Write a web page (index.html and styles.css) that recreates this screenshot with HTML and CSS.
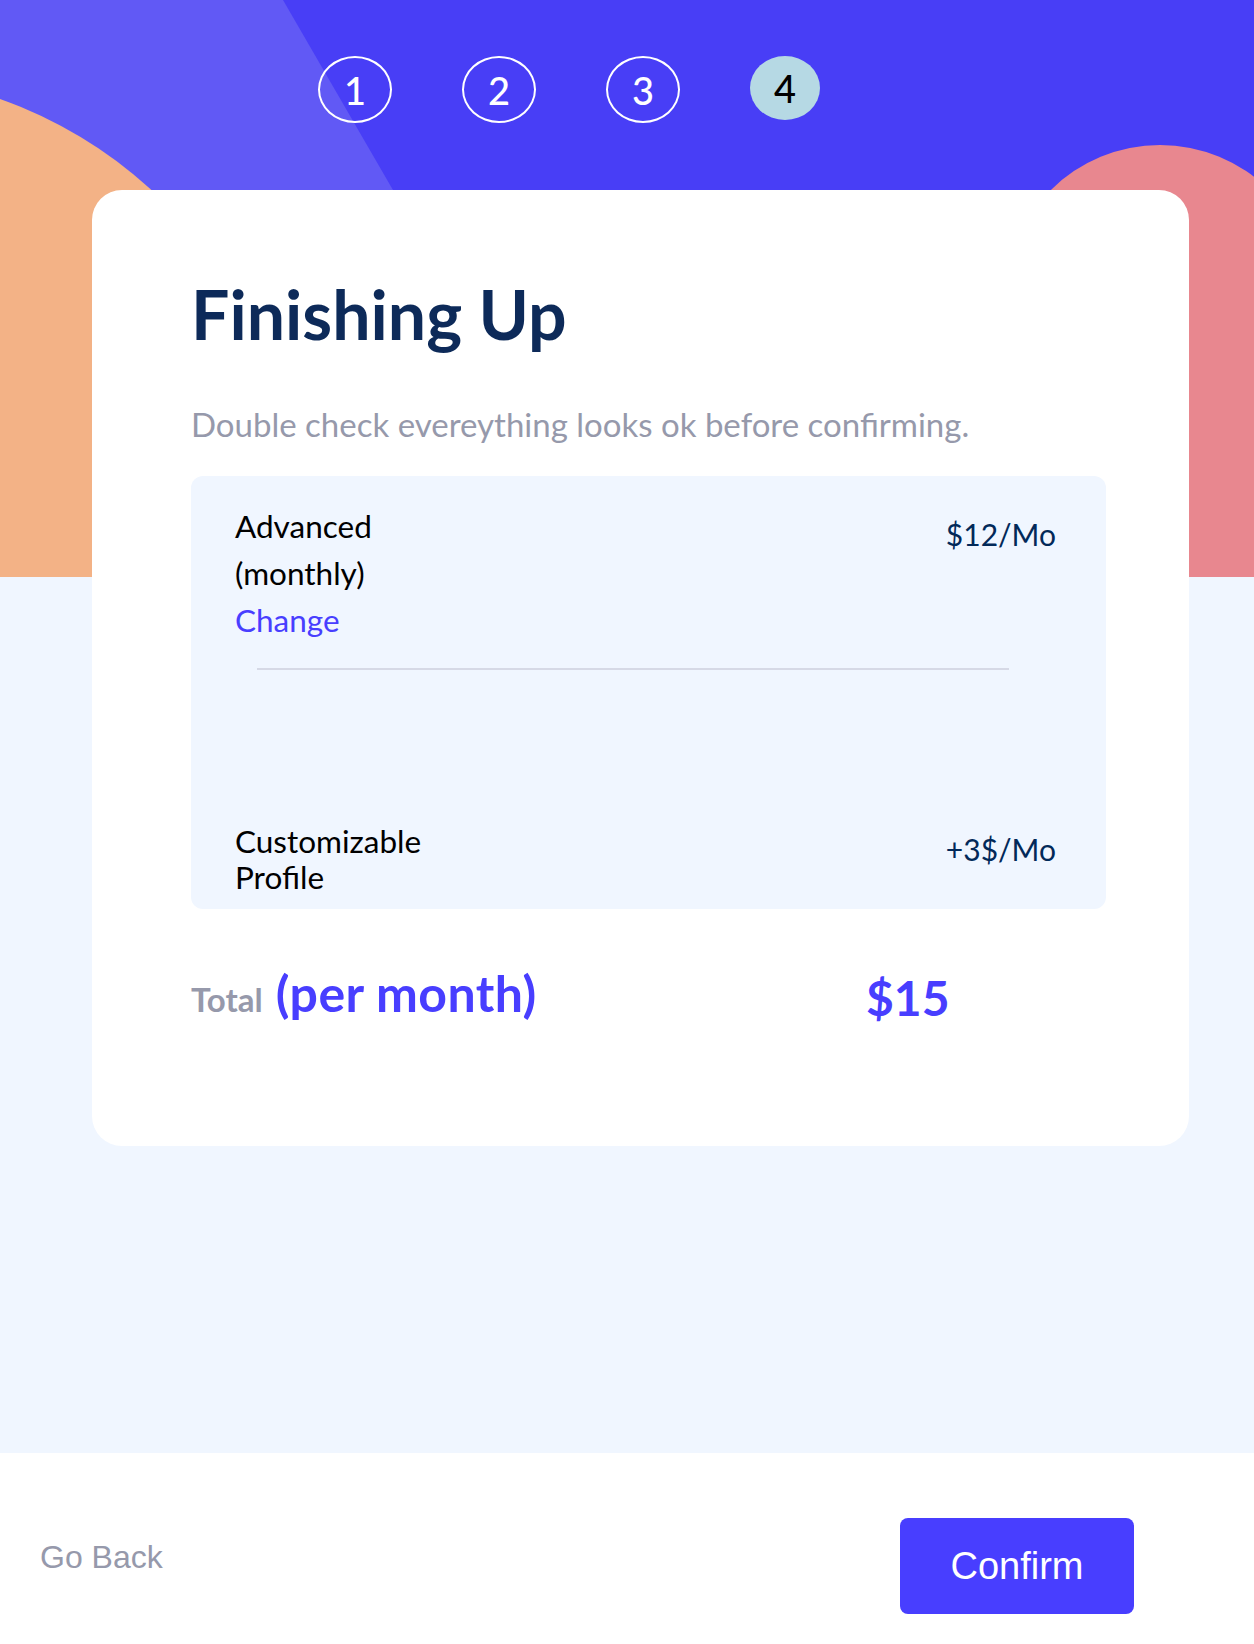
FILE: index.html
```html
<!DOCTYPE html>
<html lang="en">
<head>
<meta charset="utf-8">
<title>Finishing Up</title>
<link rel="stylesheet" href="styles.css">
</head>
<body>
<div class="stage">
  <svg class="stage-bg" width="1254" height="577" viewBox="0 0 1254 577" aria-hidden="true">
    <rect x="0" y="0" width="1254" height="577" fill="#483EF6"/>
    <polygon points="0,0 283,0 617,577 0,577" fill="#6159F5"/>
    <circle cx="-150" cy="520" r="447" fill="#F3B286"/>
    <circle cx="1160" cy="300" r="155" fill="#E8878F"/>
    <rect x="1005" y="300" width="260" height="277" fill="#E8878F"/>
  </svg>
  <nav class="steps">
    <span class="step">1</span>
    <span class="step">2</span>
    <span class="step">3</span>
    <span class="step active">4</span>
  </nav>
  <main class="card">
    <h1 class="title">Finishing Up</h1>
    <p class="subtitle">Double check evereything looks ok before confirming.</p>
    <section class="summary">
      <div class="row">
        <div class="plan">
          <span class="plan-name">Advanced (monthly)</span>
          <a class="change">Change</a>
        </div>
        <div class="price plan-price">$12/Mo</div>
      </div>
      <hr class="divider">
      <div class="row addon-row">
        <div class="addon">Customizable Profile</div>
        <div class="price addon-price">+3$/Mo</div>
      </div>
    </section>
    <div class="total">
      <div class="total-label"><span class="total-word">Total</span><span class="per">(per month)</span></div>
      <div class="total-amount">$15</div>
    </div>
  </main>
</div>
<footer class="footer">
  <button class="back" type="button">Go Back</button>
  <button class="confirm" type="button">Confirm</button>
</footer>
</body>
</html>
```
FILE: styles.css
```css
* { box-sizing: border-box; }

html, body {
  margin: 0;
  padding: 0;
}

body {
  width: 1254px;
  font-family: Lato, "Open Sans", "DejaVu Sans", sans-serif;
  background: #ffffff;
}

.stage {
  position: relative;
  background: #F0F6FF;
  padding: 56px 0 307px;
}

.stage-bg {
  position: absolute;
  top: 0;
  left: 0;
  display: block;
}

.steps {
  position: relative;
  display: flex;
  align-items: flex-start;
  gap: 70px;
  padding-left: 318px;
  height: 67px;
}

.step {
  width: 74px;
  height: 67px;
  border: 2px solid #ffffff;
  border-radius: 50%;
  display: flex;
  align-items: center;
  justify-content: center;
  color: #ffffff;
  font-size: 38px;
  line-height: 1;
  font-weight: 500;
}

.step.active {
  width: 70px;
  height: 64px;
  border: none;
  background: #B6D9E4;
  color: #000000;
}

.card {
  position: relative;
  display: block;
  margin: 67px 0 0 92px;
  width: 1097px;
  background: #ffffff;
  border-radius: 30px;
  padding: 90px 83px 124px 99px;
}

.title {
  margin: 0;
  font-size: 68px;
  line-height: 1;
  font-weight: 700;
  color: #0D2A59;
}

.subtitle {
  margin: 60px 0 0;
  font-size: 33px;
  line-height: 1;
  color: #9699AB;
}

.summary {
  margin-top: 35px;
  background: #F0F6FF;
  border-radius: 12px;
  padding: 27px 50px 14px 44px;
}

.row {
  display: flex;
  justify-content: space-between;
  align-items: flex-start;
}

.plan {
  width: 240px;
  font-size: 31.5px;
  line-height: 47px;
  color: #000000;
}

.plan-name,
.change {
  display: block;
}

.change {
  color: #483EFF;
  cursor: pointer;
}

.price {
  margin-top: 8px;
  font-size: 30px;
  color: #022959;
}

.plan-price { line-height: 47px; }

.divider {
  border: none;
  height: 2px;
  background: #D6D9E6;
  margin: 24px 47px 0 22px;
}

.addon-row {
  margin-top: 153px;
}

.addon {
  width: 240px;
  font-size: 31.5px;
  line-height: 36px;
  color: #000000;
}

.addon-price { line-height: 36px; }

.total {
  margin-top: 60px;
  display: flex;
  align-items: flex-start;
  font-weight: 700;
}

.total-label {
  flex: 0 0 675px;
  font-size: 50px;
  line-height: 48px;
}

.total-word {
  font-size: 33px;
  line-height: 1;
  color: #9699AB;
}

.per {
  margin-left: 13px;
  letter-spacing: 0.4px;
  color: #483EFF;
}

.total-amount {
  margin-top: 5px;
  font-size: 48px;
  line-height: 48px;
  color: #483EFF;
}

.footer {
  height: 191px;
  background: #ffffff;
  display: flex;
  justify-content: space-between;
  align-items: flex-start;
  padding: 0 120px 0 40px;
}

.back {
  margin-top: 88px;
  padding: 0;
  border: 0;
  background: none;
  font-family: "Liberation Sans", Arial, sans-serif;
  font-size: 32px;
  line-height: 1;
  color: #9699AB;
  cursor: pointer;
}

.confirm {
  margin-top: 65px;
  width: 234px;
  height: 96px;
  padding: 0;
  border: 0;
  border-radius: 8px;
  background: #483EFF;
  color: #ffffff;
  font-family: "Liberation Sans", Arial, sans-serif;
  font-size: 38px;
  line-height: 1;
  display: flex;
  align-items: center;
  justify-content: center;
  cursor: pointer;
}
```
